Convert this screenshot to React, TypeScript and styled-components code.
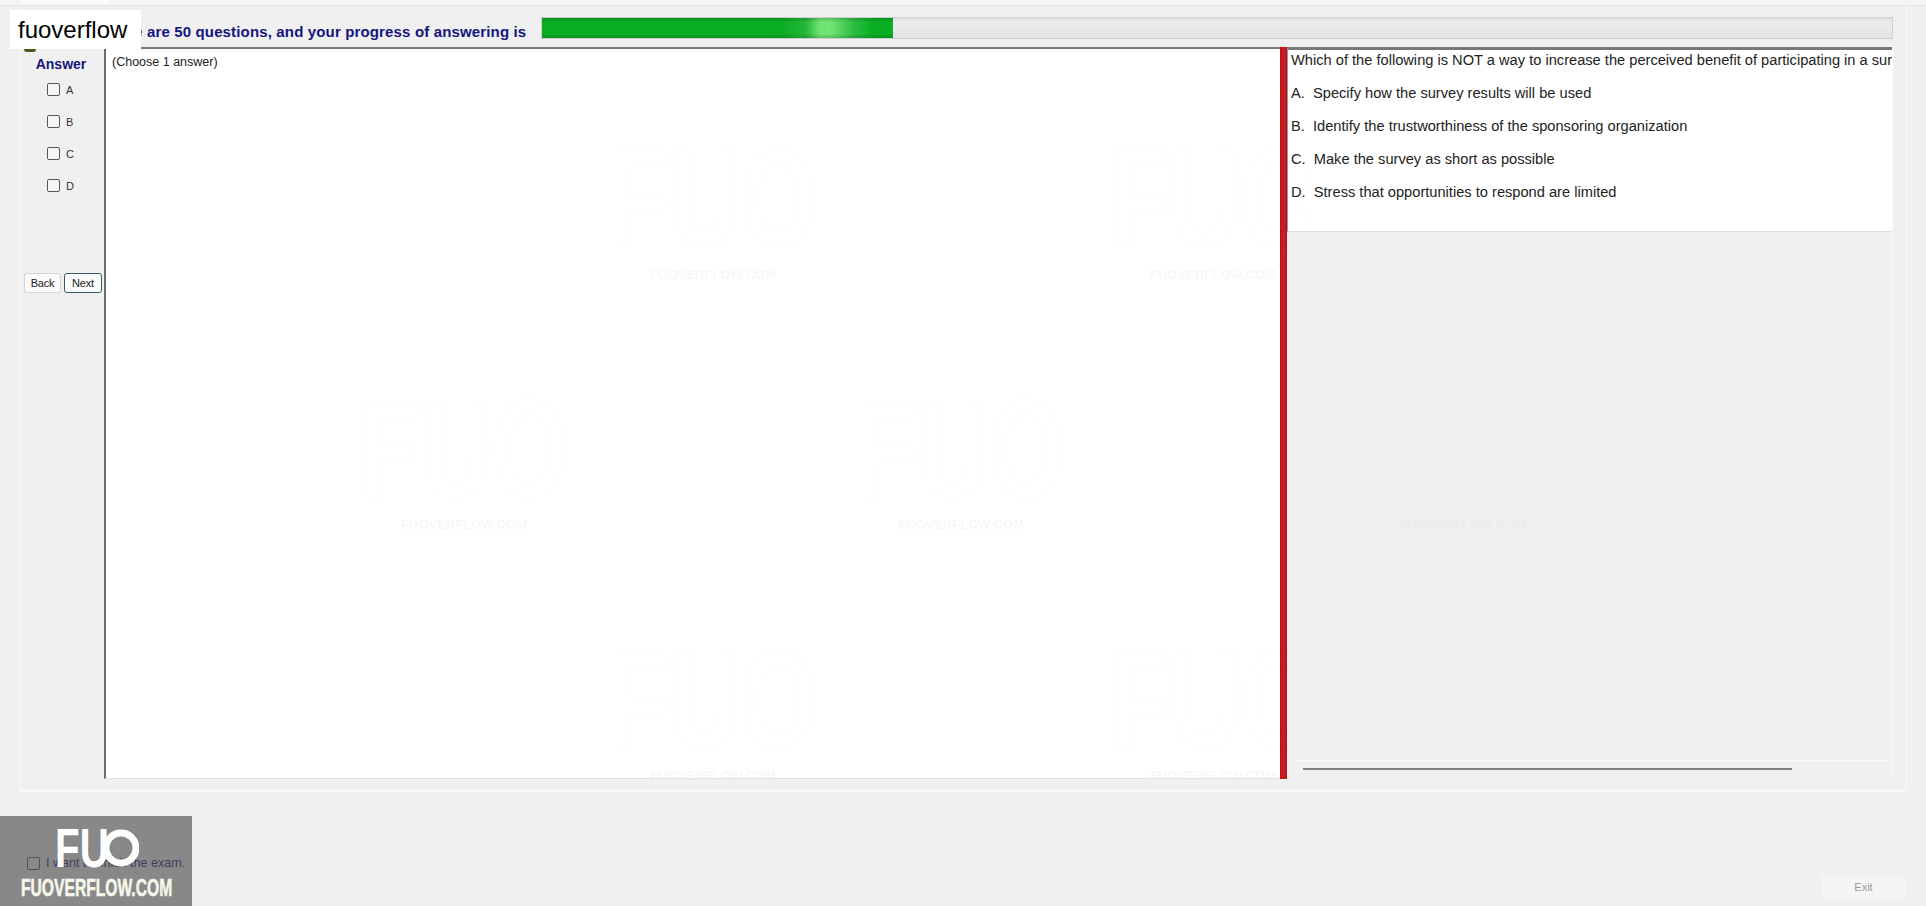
import * as React from 'react';
import styled, { createGlobalStyle } from 'styled-components';

const GlobalStyle = createGlobalStyle`
  html, body {
    margin: 0;
    padding: 0;
    background: #f0f0f0;
  }
`;

const Page = styled.div`
  position: relative;
  width: 1926px;
  height: 906px;
  overflow: hidden;
  display: flex;
  flex-direction: column;
  background: #f0f0f0;
  font-family: 'Liberation Sans', Arial, sans-serif;
  color: #1a1a1a;
`;

const TopStrip = styled.div`
  height: 5px;
  padding-left: 21px;
  border-bottom: 1px solid #e2e2e2;
  background: #f4f4f4;
`;

const TopTab = styled.div`
  width: 88px;
  height: 5px;
  background: #fbfbfb;
`;

const Frame = styled.div`
  width: 1887px;
  height: 786px;
  margin-left: 20px;
  box-sizing: border-box;
  padding-top: 11px;
  display: flex;
  flex-direction: column;
  gap: 8px;
  border-left: 1px solid #f8f8f8;
  border-right: 1px solid #f8f8f8;
  border-bottom: 2px solid #f9f9f9;
`;

const HeaderRow = styled.div`
  height: 22px;
  padding: 0 13px 0 80px;
  display: flex;
  align-items: center;
  gap: 15px;
`;

const HeaderText = styled.div`
  width: 425px;
  padding-top: 7px;
  white-space: nowrap;
  font-size: 15px;
  font-weight: bold;
  color: #14147e;
  letter-spacing: 0.15px;
`;

const ProgressTrack = styled.div`
  flex: 1;
  height: 22px;
  box-sizing: border-box;
  background: linear-gradient(#dedede, #ececec 20%, #e4e4e4);
  border: 1px solid #cfcfcf;
`;

const ProgressFill = styled.div`
  height: 20px;
  background:
    linear-gradient(rgba(0, 60, 10, 0.22), rgba(0, 0, 0, 0) 22%, rgba(0, 0, 0, 0) 78%, rgba(0, 60, 10, 0.22)),
    linear-gradient(
      90deg,
      #0aae22 0,
      #0aae22 68%,
      #22b638 75%,
      #6fe274 79%,
      #74e578 82%,
      #2cbc42 89%,
      #0aae22 94%,
      #0aae22 100%
    );
`;

const Workspace = styled.div`
  height: 732px;
  padding-right: 13px;
  display: flex;
`;

const AnswerColumn = styled.div`
  width: 83px;
  flex: none;
  display: flex;
  flex-direction: column;
`;

const AnswerTitle = styled.div`
  margin-top: 9px;
  padding-right: 3px;
  height: 16px;
  text-align: center;
  font-size: 14px;
  font-weight: bold;
  color: #14147e;
`;

const OptionList = styled.div`
  margin-top: 11px;
  padding-left: 26px;
  display: flex;
  flex-direction: column;
  gap: 19px;
`;

const OptionRow = styled.label`
  height: 13px;
  display: flex;
  align-items: center;
  gap: 6px;
  font-size: 11px;
  color: #333;
`;

const CheckBox = styled.input.attrs({ type: 'checkbox' })`
  appearance: none;
  width: 13px;
  height: 13px;
  margin: 0;
  box-sizing: border-box;
  background: #f6f6f6;
  border: 1px solid #555;
  border-radius: 2px;
`;

const NavRow = styled.div`
  margin-top: 81px;
  padding-left: 3px;
  display: flex;
  gap: 3px;
`;

const NavButton = styled.button<{ $focused?: boolean }>`
  width: ${p => (p.$focused ? 38 : 37)}px;
  height: 20px;
  padding: 0;
  box-sizing: border-box;
  font-family: inherit;
  font-size: 11px;
  letter-spacing: -0.2px;
  color: #222;
  background: #fbfbfb;
  border: 1px solid ${p => (p.$focused ? '#2f5d66' : '#d4d4d4')};
  border-radius: 3px;
`;

const MainPanel = styled.div`
  flex: 1;
  box-sizing: border-box;
  padding: 6px 0 0 6px;
  background: #fff;
  border-left: 2px solid #6e6e6e;
  border-top: 2px solid #777;
  border-bottom: 1px solid #e2e2e2;
  font-size: 12.5px;
  color: #222;
`;

const Splitter = styled.div`
  width: 7px;
  flex: none;
  background: linear-gradient(90deg, #b81218, #cf1f24 60%, #a81318);
`;

const QuestionColumn = styled.div`
  width: 606px;
  flex: none;
  display: flex;
  flex-direction: column;
  border-right: 1px solid #fafafa;
  box-sizing: border-box;
`;

const QuestionBox = styled.div`
  height: 185px;
  box-sizing: border-box;
  padding-left: 3px;
  overflow: hidden;
  background: #fff;
  border-top: 3px solid #777;
  border-left: 1px solid #999;
  border-bottom: 1px solid #dedede;
`;

const QuestionLine = styled.div`
  height: 33px;
  line-height: 20px;
  white-space: pre;
  font-size: 14.65px;
  color: #222;
`;

const ScrollZone = styled.div`
  flex: 1;
  display: flex;
  flex-direction: column;
  justify-content: flex-end;
`;

const ScrollTrack = styled.div`
  height: 19px;
  margin-left: 9px;
  padding: 7px 0 0 7px;
  box-sizing: border-box;
  border-top: 1px solid #fafafa;
`;

const ScrollThumb = styled.div`
  width: 489px;
  height: 2px;
  background: #808080;
`;

const Footer = styled.div`
  flex: 1;
  display: flex;
  justify-content: space-between;
  padding: 0 20px 8px 27px;
`;

const FinishRow = styled.label`
  align-self: flex-start;
  margin-top: 64px;
  display: flex;
  align-items: center;
  gap: 6px;
  font-size: 12.6px;
  color: #14147e;
`;

const ExitButton = styled.button`
  align-self: flex-end;
  width: 85px;
  height: 23px;
  padding: 0;
  font-family: inherit;
  font-size: 11px;
  color: #999;
  background: #f5f5f5;
  border: 1px solid #f2f2f2;
`;

const BrandSpeck = styled.div`
  position: absolute;
  left: 24px;
  top: 49px;
  width: 12px;
  height: 3px;
  border-radius: 0 0 6px 6px;
  background: #55541f;
`;

const BrandTag = styled.div`
  position: absolute;
  left: 10px;
  top: 10px;
  width: 131px;
  height: 39px;
  padding-left: 8px;
  box-sizing: border-box;
  background: #fff;
  font-size: 24px;
  line-height: 40px;
  color: #000;
`;

const LogoOverlay = styled.div`
  position: absolute;
  left: 0;
  bottom: 0;
  width: 192px;
  height: 90px;
  background: rgba(80, 80, 80, 0.65);
`;

const LogoMark = styled.div`
  position: absolute;
  left: 55px;
  top: 12px;
  display: flex;
  align-items: center;
`;

const LogoLetters = styled.span`
  width: 48px;
  font-size: 56px;
  line-height: 40px;
  font-weight: bold;
  color: #fff;
  transform: scaleX(0.72);
  transform-origin: left center;
`;

const LogoName = styled.div`
  position: absolute;
  left: 21px;
  top: 60px;
  font-size: 23px;
  line-height: 24px;
  font-weight: bold;
  white-space: nowrap;
  color: #f6f6ea;
  -webkit-text-stroke: 0.6px #f6f6ea;
  transform: scaleX(0.68);
  transform-origin: left center;
`;

const Watermark = styled.div<{ $x: number; $y: number }>`
  position: absolute;
  left: ${p => p.$x}px;
  top: ${p => p.$y}px;
  width: 200px;
  display: flex;
  flex-direction: column;
  align-items: center;
  gap: 16px;
  pointer-events: none;
`;

const WatermarkLogo = styled.div`
  height: 104px;
  font-size: 98px;
  line-height: 104px;
  font-weight: bold;
  color: transparent;
  -webkit-text-stroke: 1px rgba(0, 0, 0, 0.012);
  transform: scaleY(1.42);
`;

const WatermarkName = styled.div`
  font-size: 13px;
  line-height: 16px;
  font-weight: bold;
  color: rgba(225, 225, 225, 0.25);
`;

const options = ['A', 'B', 'C', 'D'];

const questionLines = [
  'Which of the following is NOT a way to increase the perceived benefit of participating in a survey?',
  'A.  Specify how the survey results will be used',
  'B.  Identify the trustworthiness of the sponsoring organization',
  'C.  Make the survey as short as possible',
  'D.  Stress that opportunities to respond are limited'
];

const watermarks = [
  { x: 613, y: 147 },
  { x: 1113, y: 147 },
  { x: 364, y: 397 },
  { x: 861, y: 397 },
  { x: 1363, y: 397 },
  { x: 613, y: 648 },
  { x: 1113, y: 648 }
];

export default function App() {
  return (
    <Page>
      <GlobalStyle />
      <TopStrip>
        <TopTab />
      </TopStrip>
      <Frame>
        <HeaderRow>
          <HeaderText>There are 50 questions, and your progress of answering is</HeaderText>
          <ProgressTrack>
            <ProgressFill style={{ width: `${(351 / 1350) * 100}%` }} />
          </ProgressTrack>
        </HeaderRow>
        <Workspace>
          <AnswerColumn>
            <AnswerTitle>Answer</AnswerTitle>
            <OptionList>
              {options.map(option => (
                <OptionRow key={option}>
                  <CheckBox />
                  {option}
                </OptionRow>
              ))}
            </OptionList>
            <NavRow>
              <NavButton>Back</NavButton>
              <NavButton $focused>Next</NavButton>
            </NavRow>
          </AnswerColumn>
          <MainPanel>(Choose 1 answer)</MainPanel>
          <Splitter />
          <QuestionColumn>
            <QuestionBox>
              {questionLines.map(line => (
                <QuestionLine key={line}>{line}</QuestionLine>
              ))}
            </QuestionBox>
            <ScrollZone>
              <ScrollTrack>
                <ScrollThumb />
              </ScrollTrack>
            </ScrollZone>
          </QuestionColumn>
        </Workspace>
      </Frame>
      <Footer>
        <FinishRow>
          <CheckBox />I want to finish the exam.
        </FinishRow>
        <ExitButton>Exit</ExitButton>
      </Footer>

      {watermarks.map(mark => (
        <Watermark key={`${mark.x}-${mark.y}`} $x={mark.x} $y={mark.y}>
          <WatermarkLogo>FUO</WatermarkLogo>
          <WatermarkName>FUOVERFLOW.COM</WatermarkName>
        </Watermark>
      ))}

      <BrandSpeck />
      <BrandTag>fuoverflow</BrandTag>
      <LogoOverlay>
        <LogoMark>
          <LogoLetters>FU</LogoLetters>
          <svg width="36" height="40" viewBox="0 0 36 40">
            <circle cx="18" cy="20" r="15" fill="none" stroke="#fff" strokeWidth="7" />
          </svg>
        </LogoMark>
        <LogoName>FUOVERFLOW.COM</LogoName>
      </LogoOverlay>
    </Page>
  );
}
